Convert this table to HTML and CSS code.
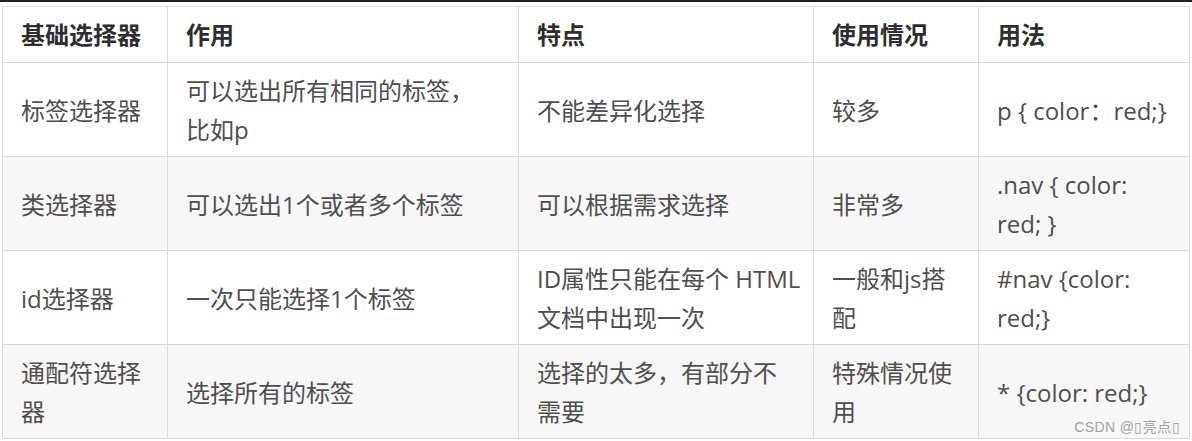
FILE: index.html
```html
<!DOCTYPE html>
<html lang="zh-CN">
<head>
<meta charset="utf-8">
<title>基础选择器</title>
<link rel="stylesheet" href="styles.css">
</head>
<body>
<div class="topbar"></div>
<div class="frame">
  <table class="sel-table">
    <colgroup>
      <col class="c1"><col class="c2"><col class="c3"><col class="c4"><col class="c5">
    </colgroup>
    <thead>
      <tr><th>基础选择器</th><th>作用</th><th>特点</th><th>使用情况</th><th>用法</th></tr>
    </thead>
    <tbody>
      <tr>
        <td>标签选择器</td>
        <td>可以选出所有相同的标签，<br>比如p</td>
        <td>不能差异化选择</td>
        <td>较多</td>
        <td>p { color：red;}</td>
      </tr>
      <tr>
        <td>类选择器</td>
        <td>可以选出1个或者多个标签</td>
        <td>可以根据需求选择</td>
        <td>非常多</td>
        <td>.nav { color:<br>red; }</td>
      </tr>
      <tr>
        <td>id选择器</td>
        <td>一次只能选择1个标签</td>
        <td class="nowrap">ID属性只能在每个 HTML<br>文档中出现一次</td>
        <td>一般和js搭<br>配</td>
        <td>#nav {color:<br>red;}</td>
      </tr>
      <tr>
        <td>通配符选择<br>器</td>
        <td>选择所有的标签</td>
        <td>选择的太多，有部分不<br>需要</td>
        <td>特殊情况使<br>用</td>
        <td>* {color: red;}</td>
      </tr>
    </tbody>
  </table>
  <div class="watermark">CSDN @▯亮点▯</div>
</div>
</body>
</html>
```
FILE: styles.css
```css
html, body {
  margin: 0;
  padding: 0;
  background: #ffffff;
}

.topbar {
  height: 2px;
  background: #1e1e1e;
}

.frame {
  position: relative;
  padding: 4px 0 0 2px;
  width: 1187px;
}

.sel-table {
  width: 1187px;
  table-layout: fixed;
  border-collapse: collapse;
  font-family: "Open Sans", "Noto Sans CJK SC", sans-serif;
  font-size: 24px;
  line-height: 39px;
  color: #4f4f4f;
}

.c1 { width: 165px; }
.c2 { width: 351px; }
.c3 { width: 295px; }
.c4 { width: 165px; }
.c5 { width: 211px; }

.sel-table th,
.sel-table td {
  border: 1px solid #dadada;
  text-align: left;
  vertical-align: middle;
  padding: 8px 8px 7px 18px;
  overflow: visible;
}

.sel-table th {
  font-weight: 700;
  color: #2e2e2e;
  padding-top: 8px;
  padding-bottom: 8px;
  background: #ffffff;
}

.sel-table tbody tr:nth-child(2n) {
  background: #f7f7f7;
}

.nowrap {
  white-space: nowrap;
}

.watermark {
  position: absolute;
  right: 9px;
  bottom: 3px;
  font-family: "Liberation Sans", "Noto Sans CJK SC", sans-serif;
  font-size: 14px;
  color: #a3a3a3;
  letter-spacing: 0.4px;
}
```
